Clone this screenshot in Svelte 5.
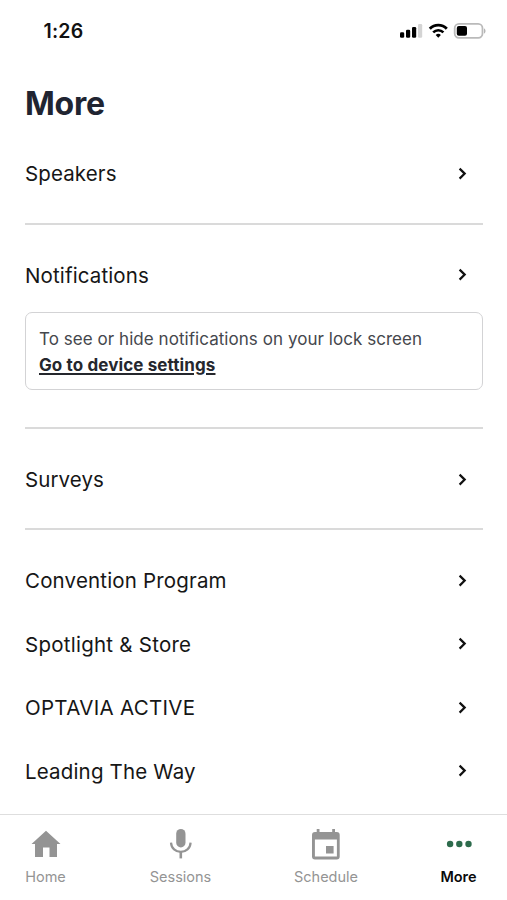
<script>
  const groups = [
    [{ label: 'Speakers', spacing: 0.12 }],
    [{ label: 'Notifications', spacing: 0.13 }],
    [{ label: 'Surveys', spacing: 0.08 }],
    [
      { label: 'Convention Program', spacing: 0.17 },
      { label: 'Spotlight & Store', spacing: 0.25 },
      { label: 'OPTAVIA ACTIVE', spacing: 0.3 },
      { label: 'Leading The Way', spacing: 0.17 }
    ]
  ];
</script>

<div class="screen">
  <header class="status">
    <span class="time">1:26</span>
    <svg class="indicators" width="90" height="20" viewBox="0 0 90 20">
      <rect x="2" y="12.3" width="4.2" height="5.5" rx="1.3" />
      <rect x="8" y="9.8" width="4.2" height="8" rx="1.3" />
      <rect x="14" y="7" width="4.2" height="10.8" rx="1.3" />
      <rect x="20" y="4" width="4.2" height="13.8" rx="1.3" fill="#d4d4d4" />
      <path d="M31.8 8.7a12 12 0 0 1 17 0" fill="none" stroke="#000" stroke-width="2.9" />
      <path d="M35.2 12.3a7.2 7.2 0 0 1 10.2 0" fill="none" stroke="#000" stroke-width="2.6" />
      <path d="M37.7 15a3.8 3.8 0 0 1 5.2 0l-2.6 2.7z" />
      <rect x="56.7" y="3.9" width="27.8" height="14" rx="4.3" fill="#fff" stroke="#bababa" stroke-width="1.8" />
      <rect x="58.8" y="6" width="10.2" height="9.8" rx="2" />
      <path d="M86 8.4c2 .5 2 4.5 0 5z" fill="#b5b5b5" />
    </svg>
  </header>

  <main>
    <h1>More</h1>
    {#each groups as group}
      <section>
        {#each group as item}
          <div class="row">
            <span style="letter-spacing: {item.spacing}px">{item.label}</span>
            <svg width="10" height="14" viewBox="0 0 10 14">
              <path d="M1.6 1.6 6.7 6.6 1.6 11.6" fill="none" stroke="#111" stroke-width="2.2" />
            </svg>
          </div>
          {#if item.label === 'Notifications'}
            <div class="note">
              <p>To see or hide notifications on your lock screen</p>
              <span class="link">Go to device settings</span>
            </div>
          {/if}
        {/each}
      </section>
    {/each}
  </main>

  <nav>
    <div class="tab home">
      <svg width="32" height="32" viewBox="0 0 32 32">
        <path d="M16 2.8 30.5 16H27v13h-7.5V19.5h-6.5V29H5V16H1.5z" fill="#949494" />
      </svg>
      <span>Home</span>
    </div>
    <div class="tab sessions">
      <svg width="32" height="32" viewBox="0 0 32 32">
        <rect x="11.2" y="1" width="9.3" height="18.4" rx="4.65" fill="#949494" />
        <path d="M6 14.6c.3 5.7 4.7 9.2 9.8 9.2s9.5-3.5 9.8-9.2" fill="none" stroke="#949494" stroke-width="2.2" />
        <path d="M15.8 23.8v6.6" stroke="#949494" stroke-width="2.6" />
      </svg>
      <span>Sessions</span>
    </div>
    <div class="tab schedule">
      <svg width="32" height="32" viewBox="0 0 32 32">
        <path fill="#949494" fill-rule="evenodd" d="M6.7 1h2.8v3h12.7V1H25v3h1.7a3 3 0 0 1 3 3v21.5a3 3 0 0 1-3 3H5a3 3 0 0 1-3-3V7a3 3 0 0 1 3-3h1.7zM4.9 11.6v17h22v-17zM16 18h7.6v7.5H16z" />
      </svg>
      <span>Schedule</span>
    </div>
    <div class="tab more">
      <svg width="32" height="32" viewBox="0 0 32 32">
        <g fill="#2d6b4c">
          <circle cx="7.1" cy="16" r="3.2" />
          <circle cx="16.3" cy="16" r="3.2" />
          <circle cx="25.5" cy="16" r="3.2" />
        </g>
      </svg>
      <span>More</span>
    </div>
  </nav>
</div>

<style>
  :global(body) {
    background: #fff;
  }
  .screen {
    display: flex;
    flex-direction: column;
    width: 507px;
    height: 900px;
    overflow: hidden;
    background: #fff;
    color: #161616;
    font-family: Inter, sans-serif;
  }
  .status {
    display: flex;
    justify-content: space-between;
    align-items: flex-start;
    box-sizing: border-box;
    height: 76px;
    padding: 20px 19px 0 43.5px;
  }
  .time {
    font-size: 19.5px;
    line-height: 23px;
    font-weight: 600;
    letter-spacing: 0.2px;
    color: #111;
  }
  main {
    flex: 1;
    padding: 0 24.5px 0 25px;
  }
  h1 {
    margin: 0;
    height: 66px;
    font-size: 32px;
    line-height: 56px;
    font-weight: 700;
    letter-spacing: -0.2px;
    color: #202431;
  }
  section + section {
    margin-top: 17.1px;
    padding-top: 18.8px;
    border-top: 2px solid #dadada;
  }
  .row {
    display: flex;
    align-items: center;
    justify-content: space-between;
    height: 63.5px;
    padding-right: 15px;
    font-size: 20.5px;
    white-space: nowrap;
  }
  .note {
    box-sizing: border-box;
    height: 78px;
    margin: 5.6px 0 36.5px;
    padding: 14px 13px 0;
    border: 1.5px solid #d3d3d5;
    border-radius: 7px;
    font-size: 17px;
    line-height: 25.5px;
    letter-spacing: 0.05px;
    color: #45474d;
    white-space: nowrap;
  }
  .note p {
    margin: 0;
  }
  .link {
    display: block;
    font-size: 17px;
    font-weight: 700;
    letter-spacing: 0.11px;
    color: #25272d;
    text-decoration: underline;
    text-decoration-thickness: 2px;
    text-underline-offset: 2px;
  }
  nav {
    display: flex;
    box-sizing: border-box;
    height: 86px;
    padding-top: 13px;
    border-top: 1px solid #dedede;
  }
  .tab {
    display: flex;
    flex-direction: column;
    align-items: center;
    font-size: 14.5px;
    line-height: 18px;
    color: #949494;
  }
  .tab span {
    margin-top: 8px;
  }
  .home {
    width: 91px;
  }
  .sessions {
    width: 179px;
  }
  .schedule {
    width: 112px;
  }
  .more {
    width: 153px;
    margin-right: -28px;
    color: #0a0a0a;
  }
  .more span {
    font-weight: 600;
    letter-spacing: -0.1px;
  }
</style>
